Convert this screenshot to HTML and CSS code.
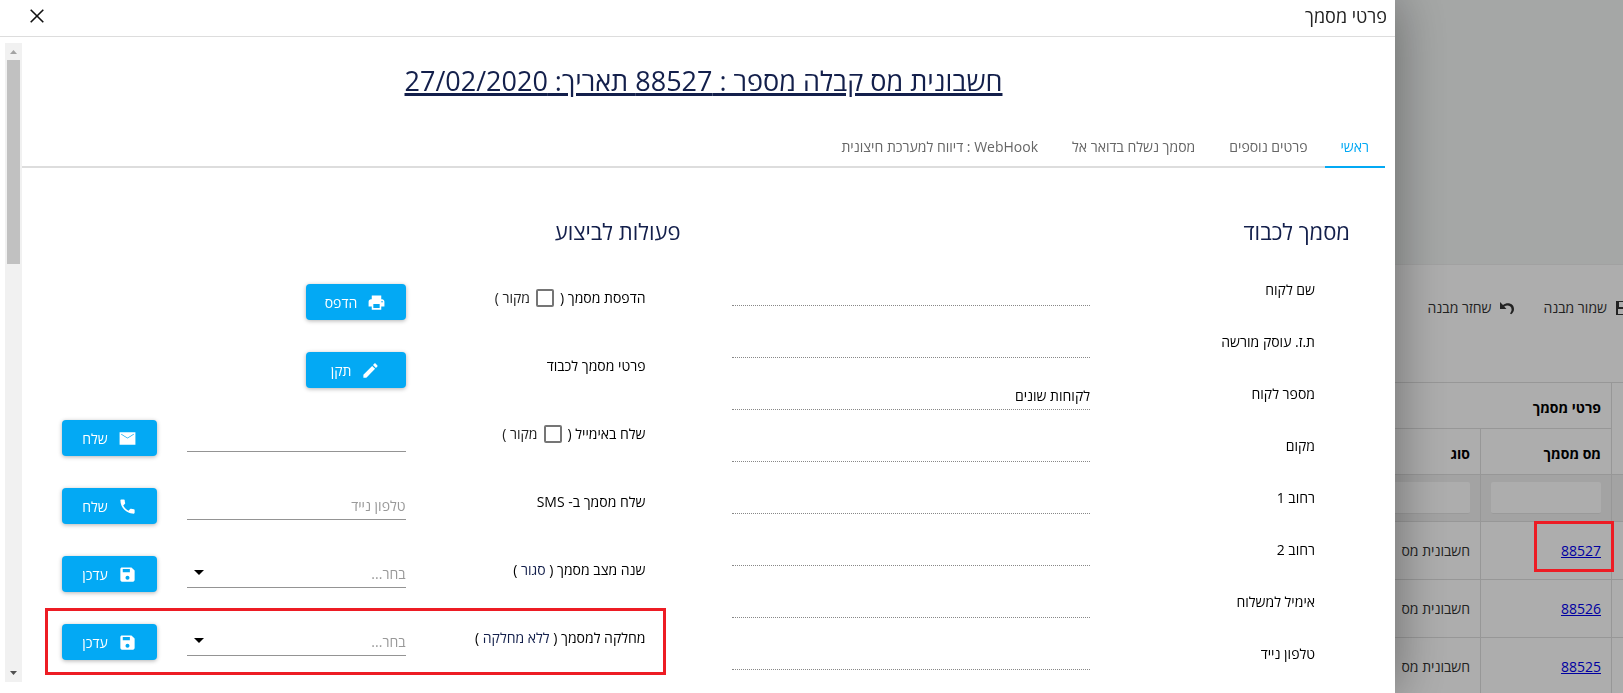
FILE: index.html
```html
<!DOCTYPE html>
<html lang="he" dir="rtl">
<head>
    <meta charset="UTF-8">
    <meta name="viewport" content="width=device-width, initial-scale=1.0">
    <title>פרטי מסמך</title>
    <link rel="stylesheet" href="styles.css">
</head>
<body>
    <!-- Documents grid behind the popup -->
    <div class="page">
        <div class="page-top"></div>
        <div class="toolbar">
            <button class="tool-button">
                <svg class="tool-icon" viewBox="0 0 16 16"><path fill-rule="evenodd" d="M1 1h12l2 2v12H1zM4 2v5h8V2zM9 3h2v3H9zM3 9v5h10V9z"/></svg>
                שמור מבנה
            </button>
            <button class="tool-button">
                <svg class="tool-icon" viewBox="0 0 16 16"><path d="M1 2v7h6.500L5.200 6.500C8.500 4.500 12.600 6 12.600 9.500c0 1.500-.6 2.800-1.600 4l1.200.8C13.800 13 15 11.500 15 9c0-5.500-6.500-7.500-11-4z"/></svg>
                שחזר מבנה
            </button>
        </div>
        <table class="grid">
            <colgroup>
                <col class="col-edge">
                <col class="col-number">
                <col>
            </colgroup>
            <thead>
                <tr>
                    <th rowspan="2"></th>
                    <th colspan="2">פרטי מסמך</th>
                </tr>
                <tr>
                    <th>מס מסמך</th>
                    <th>סוג</th>
                </tr>
            </thead>
            <tbody>
                <tr class="filter-row">
                    <td></td>
                    <td><input type="text" class="filter-input" aria-label="מס מסמך"></td>
                    <td><input type="text" class="filter-input" aria-label="סוג"></td>
                </tr>
                <tr>
                    <td></td>
                    <td class="number-cell"><a href="#">88527</a><span class="highlight highlight-cell"></span></td>
                    <td>חשבונית מס</td>
                </tr>
                <tr>
                    <td></td>
                    <td><a href="#">88526</a></td>
                    <td>חשבונית מס</td>
                </tr>
                <tr>
                    <td></td>
                    <td><a href="#">88525</a></td>
                    <td>חשבונית מס</td>
                </tr>
            </tbody>
        </table>
    </div>
    <div class="shade"></div>

    <!-- Document details popup -->
    <div class="popup" role="dialog" aria-labelledby="popupTitle">
        <div class="popup-header">
            <span id="popupTitle">פרטי מסמך</span>
            <button class="close-button" aria-label="סגור">
                <svg viewBox="0 0 14 14"><path d="M.7.7l12.600 12.600M13.300.7L.7 13.300"/></svg>
            </button>
        </div>

        <div class="popup-body">
            <div class="popup-content">
                <h1 class="doc-title">חשבונית מס קבלה מספר : 88527 תאריך: 27/02/2020</h1>

                <div class="tabs" role="tablist">
                    <button class="tab active" role="tab" aria-selected="true">ראשי</button>
                    <button class="tab" role="tab">פרטים נוספים</button>
                    <button class="tab" role="tab">מסמך נשלח בדואר אל</button>
                    <button class="tab" role="tab"><bdi dir="rtl">WebHook : דיווח למערכת חיצונית</bdi></button>
                </div>

                <div class="columns">
                    <section class="details">
                        <h2>מסמך לכבוד</h2>
                        <div class="details-row">
                            <label for="clientName">שם לקוח</label>
                            <input type="text" id="clientName">
                        </div>
                        <div class="details-row">
                            <label for="clientVat">ת.ז. עוסק מורשה</label>
                            <input type="text" id="clientVat">
                        </div>
                        <div class="details-row">
                            <label for="clientNumber">מספר לקוח</label>
                            <input type="text" id="clientNumber" value="לקוחות שונים">
                        </div>
                        <div class="details-row">
                            <label for="clientCity">מקום</label>
                            <input type="text" id="clientCity">
                        </div>
                        <div class="details-row">
                            <label for="street1">רחוב 1</label>
                            <input type="text" id="street1">
                        </div>
                        <div class="details-row">
                            <label for="street2">רחוב 2</label>
                            <input type="text" id="street2">
                        </div>
                        <div class="details-row">
                            <label for="shipEmail">אימיל למשלוח</label>
                            <input type="text" id="shipEmail">
                        </div>
                        <div class="details-row">
                            <label for="mobile">טלפון נייד</label>
                            <input type="text" id="mobile">
                        </div>
                    </section>

                    <section class="actions">
                        <h2>פעולות לביצוע</h2>
                        <div class="action-row">
                            <div class="action-label with-check">
                                <span>הדפסת מסמך (</span>
                                <label class="check"><input type="checkbox"> מקור )</label>
                            </div>
                            <button class="button button-wide">
                                <svg viewBox="0 0 24 24"><path d="M18 3v5h1c1.660 0 3 1.340 3 3v6h-4v4H6v-4H2v-6c0-1.660 1.340-3 3-3h1V3zm-2 16v-5H8v5zm3-7c.55 0 1-.45 1-1s-.45-1-1-1-1 .45-1 1 .45 1 1 1z"/></svg>
                                הדפס
                            </button>
                        </div>
                        <div class="action-row">
                            <div class="action-label">פרטי מסמך לכבוד</div>
                            <button class="button button-wide">
                                <svg viewBox="0 0 24 24"><path d="M3 17.250V21h3.750L17.810 9.940l-3.750-3.750L3 17.250zM20.710 7.040c.39-.39.39-1.020 0-1.410l-2.340-2.340c-.39-.39-1.020-.39-1.410 0l-1.830 1.830 3.750 3.750 1.830-1.830z"/></svg>
                                תקן
                            </button>
                        </div>
                        <div class="action-row">
                            <div class="action-label with-check">
                                <span>שלח באימייל (</span>
                                <label class="check"><input type="checkbox"> מקור )</label>
                            </div>
                            <input type="text" class="field" aria-label="שלח באימייל">
                            <button class="button">
                                <svg viewBox="0 0 24 24"><path d="M22 4H2v16h20V4zm-2 3l-8 5-8-5V6l8 5 8-5v1z"/></svg>
                                שלח
                            </button>
                        </div>
                        <div class="action-row">
                            <label class="action-label" for="smsPhone">שלח מסמך ב- SMS</label>
                            <input type="text" class="field" id="smsPhone" placeholder="טלפון נייד">
                            <button class="button">
                                <svg viewBox="0 0 24 24"><path d="M6.620 10.790c1.440 2.830 3.760 5.140 6.590 6.590l2.200-2.200c.27-.27.67-.36 1.020-.24 1.120.37 2.330.57 3.570.57.55 0 1 .45 1 1V20c0 .55-.45 1-1 1-9.390 0-17-7.610-17-17 0-.55.45-1 1-1h3.500c.55 0 1 .45 1 1 0 1.250.2 2.450.57 3.570.11.35.03.74-.25 1.020l-2.200 2.200z"/></svg>
                                שלח
                            </button>
                        </div>
                        <div class="action-row">
                            <label class="action-label" for="docStatus">שנה מצב מסמך ( <span class="current">סגור</span> )</label>
                            <div class="select-box">
                                <select class="field" id="docStatus"><option>בחר...</option></select>
                                <svg class="arrow" viewBox="0 0 10 5"><path d="M0 0h10L5 5z"/></svg>
                            </div>
                            <button class="button">
                                <svg viewBox="0 0 24 24"><path d="M17 3H5c-1.110 0-2 .9-2 2v14c0 1.100.89 2 2 2h14c1.100 0 2-.9 2-2V7l-4-4zm-5 15.500c-1.400 0-2.500-1.100-2.500-2.500s1.100-2.500 2.500-2.500 2.500 1.100 2.500 2.500-1.100 2.500-2.500 2.500zm3-9.500H6V5h9v4z"/></svg>
                                עדכן
                            </button>
                        </div>
                        <div class="action-row">
                            <label class="action-label" for="docDepartment">מחלקה למסמך ( <span class="current">ללא מחלקה</span> )</label>
                            <div class="select-box">
                                <select class="field" id="docDepartment"><option>בחר...</option></select>
                                <svg class="arrow" viewBox="0 0 10 5"><path d="M0 0h10L5 5z"/></svg>
                            </div>
                            <button class="button">
                                <svg viewBox="0 0 24 24"><path d="M17 3H5c-1.110 0-2 .9-2 2v14c0 1.100.89 2 2 2h14c1.100 0 2-.9 2-2V7l-4-4zm-5 15.500c-1.400 0-2.500-1.100-2.500-2.500s1.100-2.500 2.500-2.500 2.500 1.100 2.500 2.500-1.100 2.500-2.500 2.500zm3-9.500H6V5h9v4z"/></svg>
                                עדכן
                            </button>
                            <span class="highlight highlight-row"></span>
                        </div>
                    </section>
                </div>
            </div>

            <div class="scrollbar">
                <svg class="scroll-arrow up" viewBox="0 0 17 17"><path d="M5 11h7L8.500 7z"/></svg>
                <div class="scroll-track"><div class="scroll-thumb"></div></div>
                <svg class="scroll-arrow" viewBox="0 0 17 17"><path d="M5 6h7l-3.500 4z"/></svg>
            </div>
        </div>
    </div>
</body>
</html>
```
FILE: styles.css
```css
* {
    margin: 0;
    padding: 0;
    box-sizing: border-box;
}

body {
    background: #fff;
    color: #000;
    font-family: "Open Sans", "Noto Sans", sans-serif;
    font-size: 14px;
    height: 100vh;
    overflow: hidden;
}

button,
input,
select {
    font: inherit;
    color: inherit;
    background: none;
    border: none;
    border-radius: 0;
    outline: none;
}

button {
    cursor: pointer;
}

/* page behind */
.page-top {
    height: 264px;
    background: #f3f6f5;
}

.toolbar {
    display: flex;
    align-items: center;
    gap: 28px;
    height: 118px;
    padding-bottom: 32px;
    border-top: 1px solid #eee;
}

.tool-button {
    display: flex;
    align-items: center;
    gap: 8px;
    color: #333;
}

.tool-button:first-child {
    margin-right: -8px;
}

.tool-icon {
    width: 16px;
    height: 16px;
    fill: #333;
}

.grid {
    width: 100%;
    table-layout: fixed;
    border-spacing: 0;
    border-top: 1px solid #dfdfdf;
}

.col-edge {
    width: 12px;
}

.col-number {
    width: 131px;
}

.grid th,
.grid td {
    padding: 0 10px;
    text-align: right;
    border-left: 1px solid #dfdfdf;
    border-bottom: 1px solid #dfdfdf;
    overflow: hidden;
}

.grid th:first-child,
.grid td:first-child {
    padding: 0 5px;
}

.grid th,
.grid tr:nth-child(2) th {
    height: 46px;
    padding: 4px 10px 0;
}

.grid th[rowspan] {
    padding: 0 5px;
}

.grid tr:nth-child(2) th {
    border-left: 1px solid #dfdfdf;
}

.grid td {
    height: 58px;
    color: #333;
}

.grid .filter-row td {
    height: 47px;
    background: #f0f0f0;
}

.filter-input {
    display: block;
    width: 100%;
    height: 32px;
    background: #fff;
    border-bottom: 1px solid #e4e4e4;
    border-radius: 2px;
}

.grid a {
    color: #0000ee;
}

.grid .number-cell {
    position: relative;
    overflow: visible;
}

.shade {
    position: fixed;
    inset: 0;
    background: rgba(0, 0, 0, 0.32);
    z-index: 1;
}

.highlight {
    position: absolute;
    border: 3px solid #ed1c24;
    pointer-events: none;
    z-index: 2;
}

.highlight-cell {
    top: -1px;
    right: -3px;
    width: 80px;
    height: 51px;
}

.highlight-row {
    top: 0;
    bottom: 1px;
    left: -17px;
    right: -20px;
}

/* popup */
.popup {
    position: fixed;
    top: 0;
    bottom: 0;
    left: 0;
    right: 228px;
    display: flex;
    flex-direction: column;
    background: #fff;
    box-shadow: 0 0 50px rgba(0, 0, 0, 0.4);
    z-index: 3;
}

.popup-header {
    display: flex;
    align-items: center;
    justify-content: space-between;
    height: 37px;
    padding: 0 8px 4px 30px;
    border-bottom: 1px solid #ddd;
    font-size: 18px;
    color: #222;
}

.close-button svg {
    display: block;
    width: 14px;
    height: 14px;
    fill: none;
    stroke: #111;
    stroke-width: 1.6;
}

.popup-body {
    display: flex;
    flex: 1;
    min-height: 0;
    padding: 0 10px 0 5px;
}

.popup-content {
    flex: 1;
    overflow: hidden;
}

.scrollbar {
    display: flex;
    flex-direction: column;
    width: 17px;
    margin: 6px 0 11px;
    background: #f1f1f1;
}

.scroll-arrow {
    width: 17px;
    height: 17px;
    fill: #505050;
}

.scroll-arrow.up {
    fill: #a3a3a3;
}

.scroll-track {
    flex: 1;
    padding: 0 2px;
}

.scroll-thumb {
    height: 204px;
    background: #c1c1c1;
}

.doc-title {
    padding-top: 24px;
    font-size: 27px;
    font-weight: 400;
    line-height: 40px;
    text-align: center;
    text-decoration: underline;
    text-decoration-thickness: 3px;
    color: #131f4b;
}

.tabs {
    display: flex;
    margin-top: 25px;
    box-shadow: inset 0 -2px #ddd;
}

.tab {
    height: 42px;
    padding: 0 17px;
    color: #666;
    border-bottom: 2px solid transparent;
}

.tab.active {
    padding: 0 16px;
    color: #03a9f4;
    border-bottom-color: #03a9f4;
}

.columns {
    display: grid;
    grid-template-columns: 1fr 1fr;
    margin-top: 49px;
}

h2 {
    font-size: 22px;
    font-weight: 400;
    line-height: 28px;
    color: #131f4b;
}

.details {
    padding-right: 35px;
}

.details h2 {
    margin-bottom: 9px;
}

.details-row {
    display: flex;
    align-items: flex-end;
    height: 52px;
    padding: 0 35px 0 28px;
}

.details-row label {
    width: 225px;
    line-height: 32px;
}

.details-row input {
    flex: 1;
    min-width: 0;
    height: 32px;
    padding-top: 3px;
    border-bottom: 1px dotted #888;
}

.actions {
    padding-right: 23px;
}

.actions h2 {
    margin-bottom: 23px;
}

.action-row {
    position: relative;
    display: grid;
    grid-template-columns: 210px 1fr 95px;
    column-gap: 30px;
    align-items: start;
    height: 68px;
    margin: 0 35px 0 40px;
    padding-top: 16px;
}

.action-label {
    line-height: 28px;
    white-space: nowrap;
}

.with-check,
.check {
    display: flex;
    align-items: center;
    gap: 6px;
}

.check {
    color: #222;
}

.check input {
    appearance: none;
    width: 18px;
    height: 18px;
    border: 2px solid #757575;
    border-radius: 2px;
}

.current {
    color: #131f4b;
}

.field {
    display: block;
    width: 100%;
    height: 32px;
    padding-top: 3px;
    border-bottom: 1px solid #949494;
}

.field::placeholder {
    color: #999;
    opacity: 1;
}

.select-box {
    position: relative;
}

.select-box select {
    appearance: none;
    color: #999;
}

.arrow {
    position: absolute;
    top: 14px;
    left: 7px;
    width: 10px;
    height: 5px;
    pointer-events: none;
}

.button {
    display: flex;
    align-items: center;
    justify-content: center;
    gap: 10px;
    height: 36px;
    background: #03a9f4;
    color: #fff;
    border-radius: 4px;
    box-shadow: 0 1px 4px rgba(0, 0, 0, 0.3);
}

.button-wide {
    width: 100px;
}

.button svg {
    width: 19px;
    height: 19px;
    fill: #fff;
}
```
